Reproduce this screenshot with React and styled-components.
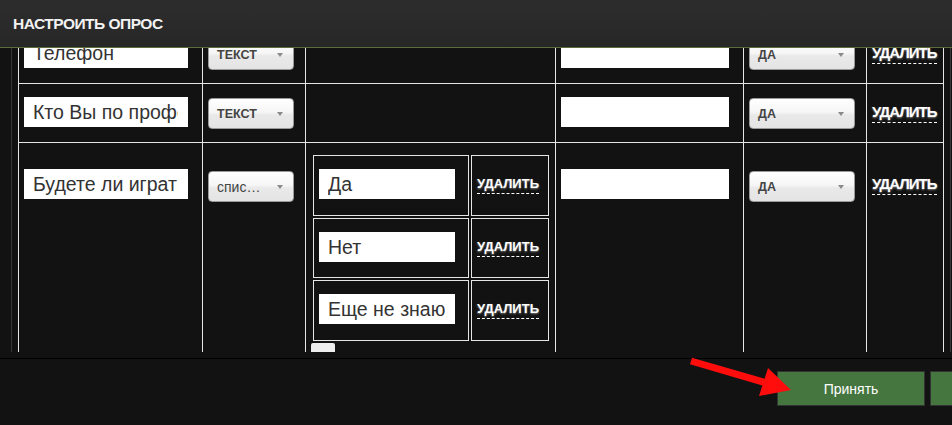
import React, { useLayoutEffect, useRef } from "react";
import styled, { createGlobalStyle } from "styled-components";

const GlobalStyle = createGlobalStyle`
    html, body {
        margin: 0;
        padding: 0;
        background: #121212;
        font-family: "Liberation Sans", Arial, sans-serif;
    }
    * { box-sizing: border-box; }
`;

const Page = styled.div`
    position: relative;
    width: 952px;
    height: 425px;
    overflow: hidden;
    background: #121212;
`;

const Header = styled.div`
    display: flex;
    align-items: center;
    height: 48px;
    padding-left: 13px;
    background: linear-gradient(#2d2d2d, #272727);
    border-bottom: 1px solid #5a6c3b;
`;

const Title = styled.h1`
    margin: 0;
    font-size: 15.5px;
    font-weight: bold;
    letter-spacing: -0.5px;
    color: #f2f2f2;
`;

const Main = styled.div`
    height: 310px;
    padding: 0 1px 0 11px;
`;

const Frame = styled.div`
    height: 304px;
    padding: 0 6px;
    border-left: 1px solid #363636;
    border-right: 1px solid #363636;
    overflow: hidden;
`;

const Grid = styled.div`
    display: grid;
    grid-template-columns: 184px 103px 250px 188px 123px 77px;
    grid-template-rows: 59px 59px auto;
    border-left: 1px solid #e6e6e6;
    border-top: 1px solid #e6e6e6;
`;

const Cell = styled.div`
    padding: ${p => p.$top}px 5px 0;
    border-right: 1px solid #e6e6e6;
    border-bottom: 1px solid #e6e6e6;
`;

const Field = styled.div`
    width: ${p => p.$w}px;
    height: 30px;
    padding: 0 10px 0 9px;
    background: #fff;
    color: #333;
    font-size: 19.5px;
    line-height: 30px;
`;

const FieldText = styled.span`
    display: block;
    white-space: nowrap;
    overflow: hidden;
`;

const Select = styled.div`
    display: flex;
    align-items: center;
    justify-content: space-between;
    width: ${p => p.$w}px;
    height: 31px;
    margin-top: ${p => p.$shift || 1}px;
    padding: 0 10px 0 8px;
    border: 1px solid #9a9a9a;
    border-radius: 4px;
    background: linear-gradient(#ffffff 0%, #f6f6f6 45%, #e9e9e9 55%, #e4e4e4 100%);
    box-shadow: inset 0 1px 0 #fff;
    color: #444;
    font-size: ${p => (p.$light ? 14 : 12.5)}px;
    font-weight: ${p => (p.$light ? "normal" : "bold")};
`;

const Caret = styled.span`
    width: 0;
    height: 0;
    border-left: 3px solid transparent;
    border-right: 3px solid transparent;
    border-top: 4px solid #8a8a8a;
`;

const Remove = styled.span`
    display: inline-block;
    margin-top: 7px;
    padding-bottom: ${p => (p.$small ? 1 : 2)}px;
    border-bottom: 1px dashed #fff;
    color: #fff;
    font-size: ${p => (p.$small ? 13 : 15)}px;
    font-weight: bold;
    line-height: 16px;
    letter-spacing: ${p => (p.$small ? 0 : -1)}px;
    text-shadow: 0 1px 2px rgba(160, 160, 160, 0.8);
`;

const Options = styled.div`
    display: grid;
    grid-template-columns: 156px 78px;
    gap: 2px;
    padding: 2px;
    width: max-content;
`;

const OptionCell = styled.div`
    height: ${p => p.$h}px;
    padding: 13px 5px 0;
    border: 1px solid #e6e6e6;
`;

const AddButton = styled.div`
    width: 24px;
    height: 20px;
    border-radius: 2px;
    background: #eeeeee;
`;

const Footer = styled.div`
    display: flex;
    gap: 5px;
    height: 67px;
    padding: 12px 0 0 777px;
    border-top: 1px solid #000;
    overflow: hidden;
`;

const Button = styled.button`
    flex-shrink: 0;
    width: 148px;
    height: 35px;
    border: 1px solid #333;
    background: #45763f;
    color: #fff;
    font-family: "Liberation Sans", Arial, sans-serif;
    font-size: 14px;
`;

const Arrow = styled.svg`
    position: absolute;
    left: 0;
    top: 0;
    pointer-events: none;
`;

const rows = [
    { name: "Телефон", kind: "ТЕКСТ", top: 13 },
    { name: "Кто Вы по профессии?", kind: "ТЕКСТ", top: 13 },
];

const options = [
    { text: "Да", h: 61 },
    { text: "Нет", h: 60 },
    { text: "Еще не знаю", h: 61 },
];

const App = () => {
    const frame = useRef(null);
    useLayoutEffect(() => {
        if (frame.current) frame.current.scrollTop = 24;
    }, []);

    return (
        <Page>
            <GlobalStyle />
            <Header>
                <Title>НАСТРОИТЬ ОПРОС</Title>
            </Header>
            <Main>
                <Frame ref={frame}>
                    <Grid>
                        {rows.map(r => (
                            <React.Fragment key={r.name}>
                                <Cell $top={r.top}><Field $w={164}><FieldText>{r.name}</FieldText></Field></Cell>
                                <Cell $top={r.top}><Select $w={86}>{r.kind}<Caret /></Select></Cell>
                                <Cell $top={r.top} />
                                <Cell $top={r.top}><Field $w={168} /></Cell>
                                <Cell $top={r.top}><Select $w={106}>ДА<Caret /></Select></Cell>
                                <Cell $top={r.top}><Remove>УДАЛИТЬ</Remove></Cell>
                            </React.Fragment>
                        ))}
                        <Cell $top={26}><Field $w={164}><FieldText>Будете ли играть?</FieldText></Field></Cell>
                        <Cell $top={26}><Select $w={86} $shift={2} $light>спис…<Caret /></Select></Cell>
                        <Cell $top={10}>
                            <Options>
                                {options.map(o => (
                                    <React.Fragment key={o.text}>
                                        <OptionCell $h={o.h}><Field $w={136}><FieldText>{o.text}</FieldText></Field></OptionCell>
                                        <OptionCell $h={o.h}><Remove $small>УДАЛИТЬ</Remove></OptionCell>
                                    </React.Fragment>
                                ))}
                            </Options>
                            <AddButton />
                        </Cell>
                        <Cell $top={26}><Field $w={168} /></Cell>
                        <Cell $top={26}><Select $w={106} $shift={2}>ДА<Caret /></Select></Cell>
                        <Cell $top={26}><Remove>УДАЛИТЬ</Remove></Cell>
                    </Grid>
                </Frame>
            </Main>
            <Footer>
                <Button>Принять</Button>
                <Button>Отмена</Button>
            </Footer>
            <Arrow width="952" height="425" viewBox="0 0 952 425">
                <line x1="691" y1="361" x2="770" y2="384" stroke="#ff0d0d" strokeWidth="7" />
                <polygon points="768,368 759,396 791,390" fill="#ff0d0d" />
            </Arrow>
        </Page>
    );
};

export default App;
